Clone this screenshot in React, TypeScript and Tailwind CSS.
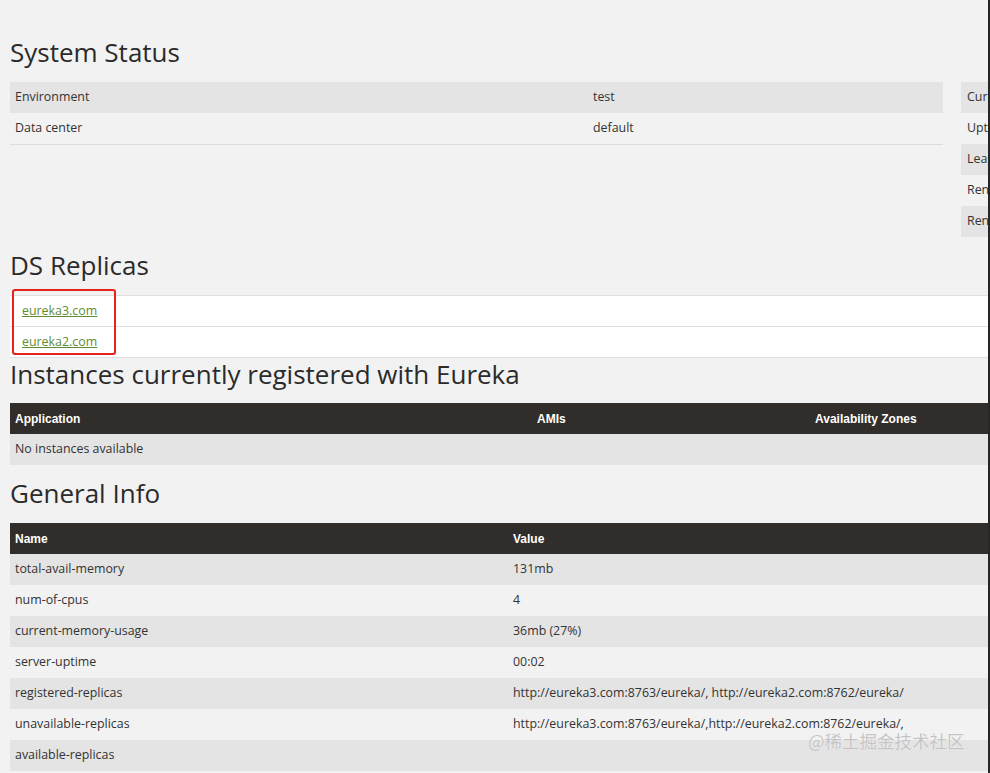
import React from 'react';

const body = 'font-["Open_Sans",sans-serif] text-[12.4px] text-[#333]';
const heading = 'font-["Open_Sans",sans-serif] text-[26px] font-medium leading-[32px] text-[#2b2b2b]';
const th = 'font-["Liberation_Sans",Arial,sans-serif] font-bold text-[12px] text-white';

type Row = [string, string];

const systemRows: Row[] = [
  ['Environment', 'test'],
  ['Data center', 'default'],
];

const sideRows: Row[] = [
  ['Current time', '2022-05-10T10:12:41 +0800'],
  ['Uptime', '00:02'],
  ['Lease expiration enabled', 'false'],
  ['Renews threshold', '1'],
  ['Renews (last min)', '0'],
];

const generalRows: Row[] = [
  ['total-avail-memory', '131mb'],
  ['num-of-cpus', '4'],
  ['current-memory-usage', '36mb (27%)'],
  ['server-uptime', '00:02'],
  ['registered-replicas', 'http://eureka3.com:8763/eureka/, http://eureka2.com:8762/eureka/'],
  ['unavailable-replicas', 'http://eureka3.com:8763/eureka/,http://eureka2.com:8762/eureka/,'],
  ['available-replicas', ''],
];

function stripe(i: number) {
  return i % 2 === 0 ? 'bg-[#e4e4e4]' : 'bg-[#f2f2f2]';
}

export default function App() {
  return (
    <div className={`relative w-[990px] h-[773px] overflow-hidden bg-[#f2f2f2] border-r-2 border-[#262626] ${body}`}>
      <div className="w-[1010px] pl-[10px] pt-[36px]">
        <h2 className={`${heading} mb-[14px]`}>System Status</h2>
        <div className="flex gap-[18px] mb-[12px]">
          <div className="w-[933px] shrink-0 self-start border-b border-[#dcdcdc]">
            {systemRows.map(([k, v], i) => (
              <div key={k} className={`flex h-[31px] items-center ${stripe(i)}`}>
                <div className="w-[578px] shrink-0 pl-[5px]">{k}</div>
                <div className="pl-[5px]">{v}</div>
              </div>
            ))}
          </div>
          <div className="w-[300px] shrink-0">
            {sideRows.map(([k, v], i) => (
              <div key={k} className={`flex h-[31px] items-center ${stripe(i)}`}>
                <div className="w-[160px] shrink-0 pl-[6px] whitespace-nowrap">{k}</div>
                <div className="pl-[5px] whitespace-nowrap">{v}</div>
              </div>
            ))}
          </div>
        </div>

        <h2 className={`${heading} mb-[14px]`}>DS Replicas</h2>
        <ul className="relative bg-white border-t border-[#e0e0e0]">
          {['eureka3.com', 'eureka2.com'].map((r) => (
            <li key={r} className="h-[31px] flex items-center pl-[12px] border-b border-[#e0e0e0]">
              <a href="#" className="text-[#5f8c32] underline">{r}</a>
            </li>
          ))}
          <div className="absolute left-[2px] top-[-7px] w-[104px] h-[66px] border-2 border-[#e8211d] rounded-[3px]" />
        </ul>

        <h2 className={`${heading} mb-[13px]`}>Instances currently registered with Eureka</h2>
        <div className="mb-[12px]">
          <div className={`flex h-[31px] items-center bg-[#312d2a] ${th}`}>
            <div className="w-[522px] shrink-0 pl-[5px]">Application</div>
            <div className="w-[278px] shrink-0 pl-[5px]">AMIs</div>
            <div className="w-[200px] shrink-0 pl-[5px]">Availability Zones</div>
            <div className="shrink-0 pl-[5px]">Status</div>
          </div>
          <div className="flex h-[31px] items-center bg-[#e4e4e4] pl-[5px]">No instances available</div>
        </div>

        <h2 className={`${heading} mb-[14px]`}>General Info</h2>
        <div>
          <div className={`flex h-[31px] items-center bg-[#312d2a] ${th}`}>
            <div className="w-[498px] shrink-0 pl-[5px]">Name</div>
            <div className="pl-[5px]">Value</div>
          </div>
          {generalRows.map(([k, v], i) => (
            <div key={k} className={`flex h-[31px] items-center ${stripe(i)}`}>
              <div className="w-[498px] shrink-0 pl-[5px]">{k}</div>
              <div className="pl-[5px]">{v}</div>
            </div>
          ))}
        </div>
      </div>

      <div className='absolute left-[808px] top-[730px] text-[17.5px] leading-[22px] text-[#c4c4c4] font-["Noto_Sans_CJK_SC",sans-serif] [text-shadow:0_0_1px_#fff]'>
        @稀土掘金技术社区
      </div>
    </div>
  );
}
